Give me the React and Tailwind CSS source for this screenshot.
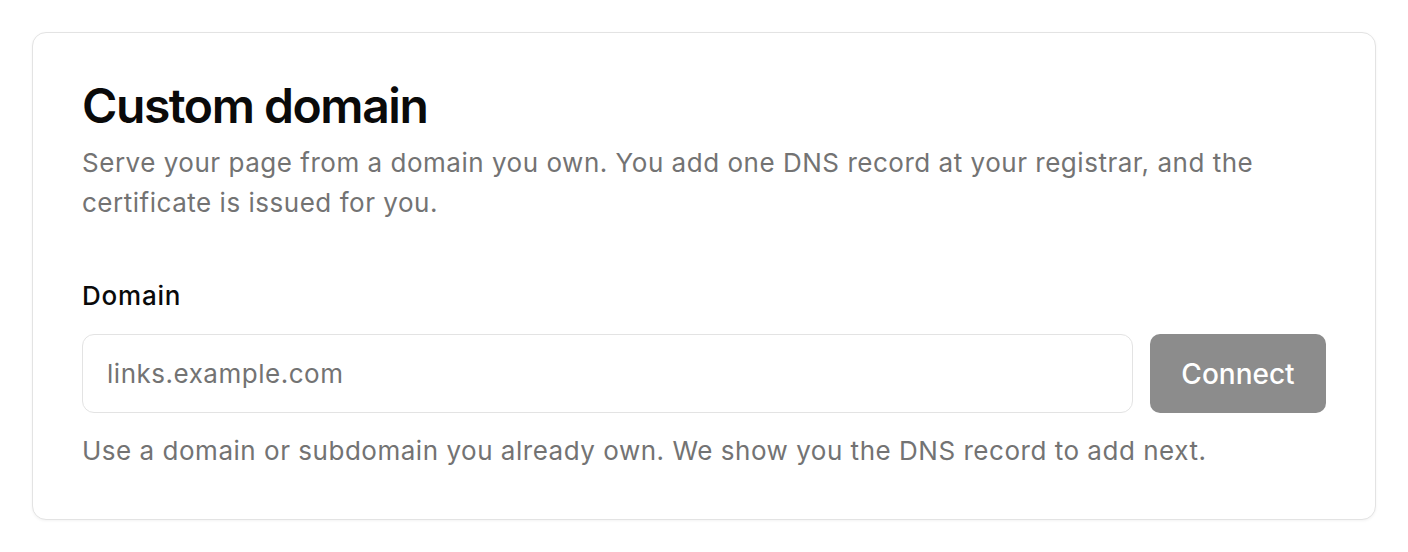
export default function App() {
  return (
    <div className="w-[1408px] h-[552px] bg-white p-8" style={{ fontFamily: 'Inter, "Noto Sans", sans-serif' }}>
      <div className="rounded-[14px] border border-[#e3e3e3] bg-white px-[49px] pt-[49px] pb-[52px] shadow-[0_1px_3px_rgba(0,0,0,0.05)]">
        <h1 className="text-[48px] leading-[48px] font-semibold text-[#0a0a0a] tracking-[-0.03em]">Custom domain</h1>
        <p className="mt-[13px] text-[26px] leading-[40px] tracking-[0.02em] text-[#737373]">
          Serve your page from a domain you own. You add one DNS record at your registrar, and the certificate is issued for you.
        </p>
        <label className="mt-[57px] block text-[26px] leading-[32px] font-medium tracking-[0.03em] text-[#0a0a0a]">Domain</label>
        <div className="mt-[22px] flex gap-[17px]">
          <input
            type="text"
            placeholder="links.example.com"
            className="h-[79px] flex-1 rounded-[12px] border border-[#e3e3e3] bg-white px-6 text-[26px] tracking-[0.02em] text-[#0a0a0a] placeholder:text-[#737373] outline-none"
          />
          <button className="h-[79px] w-[176px] rounded-[10px] bg-[#8c8c8c] text-[28px] font-medium text-white">Connect</button>
        </div>
        <p className="mt-[22px] text-[26px] leading-[32px] tracking-[0.02em] text-[#737373]">
          Use a domain or subdomain you already own. We show you the DNS record to add next.
        </p>
      </div>
    </div>
  );
}
